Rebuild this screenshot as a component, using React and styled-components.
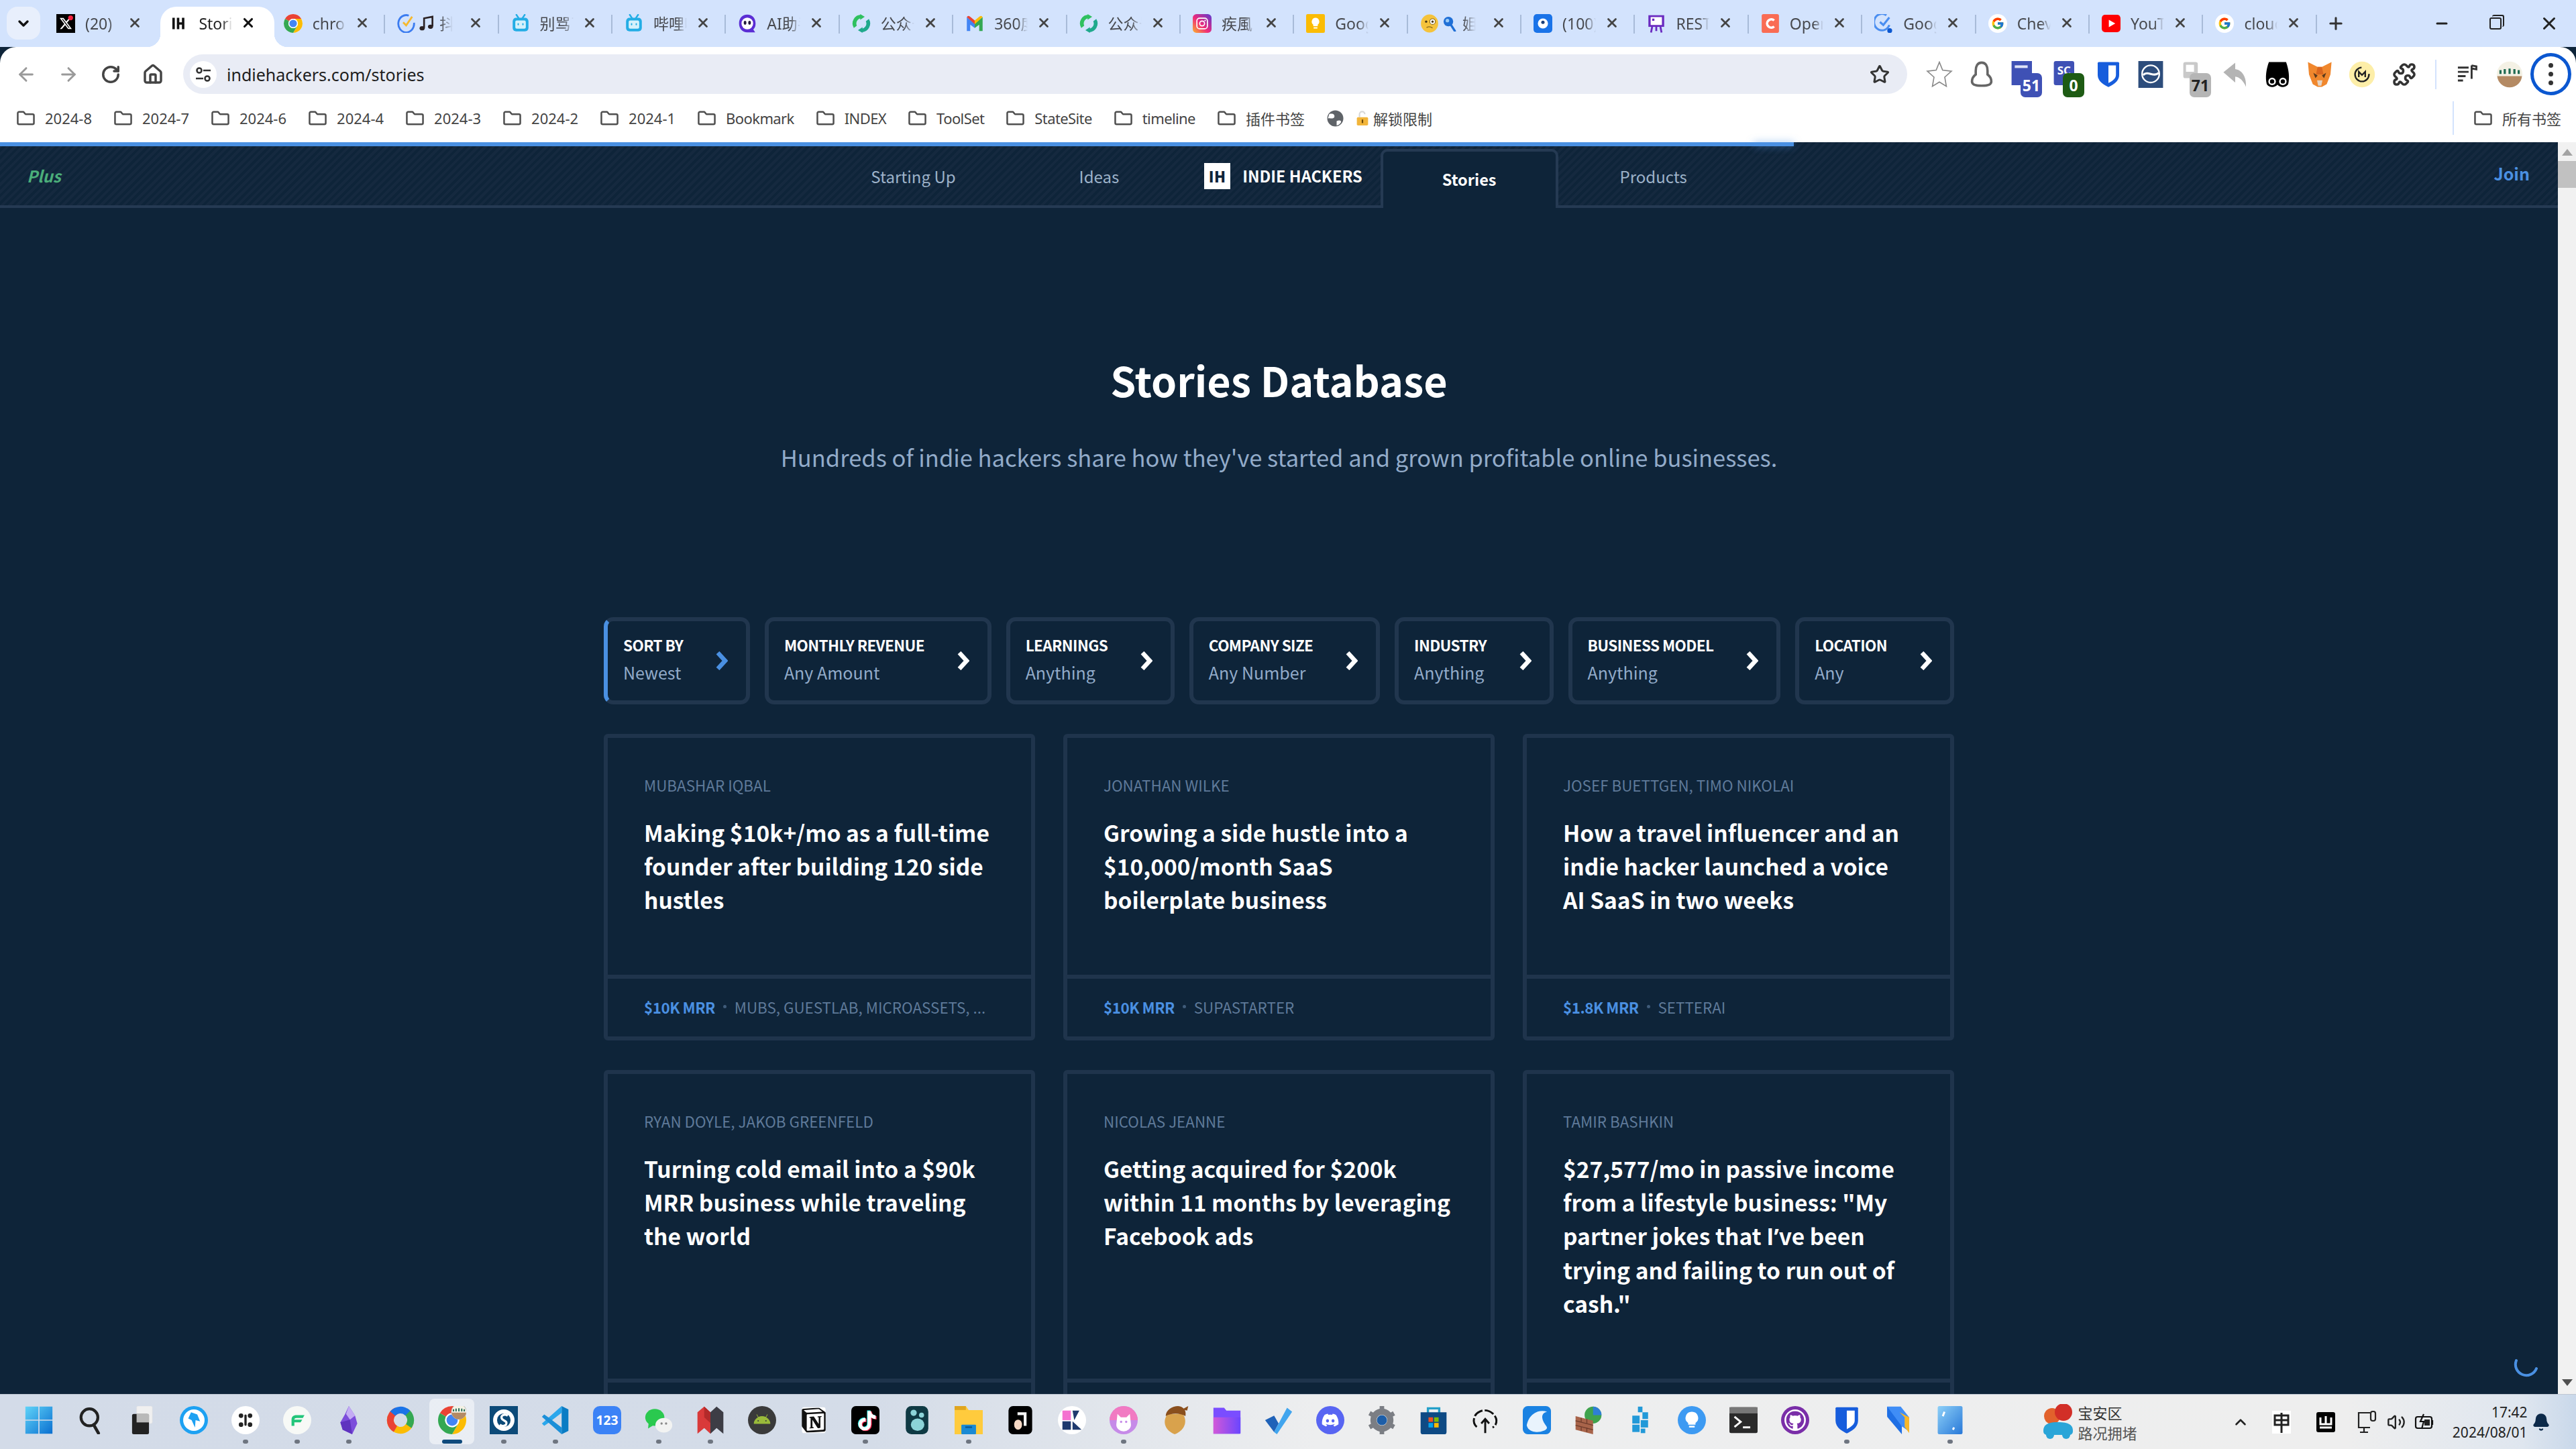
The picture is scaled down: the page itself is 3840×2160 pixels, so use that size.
import React from "react";
import styled, { createGlobalStyle, css } from "styled-components";
import { ArrowLeft, ArrowRight, RotateCw, Home, Star, Plus as PlusIcon, Minus, X, ChevronDown, ChevronUp, Puzzle, Bell, Volume2 } from "lucide-react";
import { FaXTwitter } from "react-icons/fa6";
import { FaDiscord, FaGithub, FaAndroid, FaTiktok } from "react-icons/fa";
import { FcGoogle } from "react-icons/fc";
import { SiNotion } from "react-icons/si";

const UI = `"Noto Sans", "Noto Sans CJK SC", sans-serif`;
const SITE = `"Noto Sans CJK SC", "Noto Sans", sans-serif`;

const Global = createGlobalStyle`
  html, body { margin: 0; padding: 0; background: #0e2439; overflow: hidden; }
  * { box-sizing: border-box; }
`;

const Frame = styled.div`
  width: 3840px; height: 2160px; display: flex; flex-direction: column; overflow: hidden; position: relative;
  font-family: ${UI};
`;
const TabStrip = styled.div`
  height: 70px; flex: none; background: #d3e3fd; display: flex; align-items: flex-end; padding-left: 10px;
`;
const TabMenu = styled.div`
  width: 50px; height: 49px; margin-bottom: 11px; margin-right: 10px; border-radius: 16px; background: #e8effc;
  display: flex; align-items: center; justify-content: center; color: #111;
`;
const Tab = styled.div`
  width: 169.4px; height: 60px; flex: none; position: relative; display: flex; align-items: center;
  padding: 0 0 10px 14px; border-radius: 24px 24px 0 0; color: #47494e;
  ${p => p.$active && css`
    background: #fff; color: #1f1f1f; z-index: 1;
    &::before, &::after { content: ""; position: absolute; bottom: 0; width: 20px; height: 20px; }
    &::before { left: -20px; background: radial-gradient(circle at 0 0, transparent 20px, #fff 20.5px); }
    &::after { right: -20px; background: radial-gradient(circle at 100% 0, transparent 20px, #fff 20.5px); }
  `}
  ${p => p.$sep && css`
    &::after { content: ""; position: absolute; right: 4px; top: 12px; width: 2px; height: 28px; background: #a8bbd8; }
  `}
`;
const TabExtra = styled.span`
  margin-left: 4px; flex: none;
`;
const TabLabel = styled.span`
  margin-left: ${p => (p.$short ? "7px" : "15px")}; width: ${p => (p.$short ? "20px" : "50px")}; overflow: hidden; white-space: nowrap; font-size: 23px; line-height: 30px; flex: none;
  -webkit-mask-image: linear-gradient(90deg, #000 ${p => (p.$short ? "10%" : "70%")}, transparent 100%);
  mask-image: linear-gradient(90deg, #000 ${p => (p.$short ? "10%" : "70%")}, transparent 100%);
`;
const TabClose = styled.span`
  position: absolute; left: 118px; top: 11px; width: 26px; height: 26px; display: flex; align-items: center; justify-content: center;
  color: ${p => (p.$active ? "#111" : "#444")};
`;
const NewTab = styled.div`
  width: 30px; height: 60px; margin-left: 9px; padding-bottom: 10px; display: flex; align-items: center; justify-content: center; color: #333;
`;
const WindowButtons = styled.div`
  margin-left: auto; display: flex; height: 70px;
`;
const WindowButton = styled.div`
  width: 80px; display: flex; align-items: center; justify-content: center; color: #222;
`;
const RestoreMark = styled.span`
  width: 18px; height: 18px; border: 2.5px solid #222; border-radius: 3px; position: relative; display: block;
  &::after { content: ""; position: absolute; left: 2px; top: -6px; width: 16px; height: 16px; border: 2.5px solid #222; border-left: 0; border-bottom: 0; border-radius: 3px; }
`;
const Toolbar = styled.div`
  height: 70px; flex: none; background: #fff; border-radius: 24px 24px 0 0; padding: 11px 0 0 7px; display: flex; align-items: flex-start;
  position: relative; z-index: 0;
`;
const ToolButton = styled.div`
  width: 63px; height: 59px; flex: none; display: flex; align-items: center; justify-content: center;
  color: ${p => (p.$dim ? "#9a9a9a" : "#444")};
`;
const Omnibox = styled.div`
  flex: 1; height: 59px; margin-left: 14px; margin-right: 16px; border-radius: 30px; background: #e9ecf5;
  display: flex; align-items: center; padding: 0 26px 0 10px;
`;
const SiteChip = styled.div`
  width: 40px; height: 40px; flex: none; border-radius: 50%; background: #fff; display: flex; align-items: center; justify-content: center;
`;
const UrlText = styled.span`
  margin-left: 15px; font-size: 25px; color: #1f1f1f; flex: 1;
`;
const ExtSlot = styled.div`
  width: 63px; height: 59px; flex: none; display: flex; align-items: center; justify-content: center; position: relative; color: #555;
`;
const ExtBadge = styled.span`
  position: absolute; left: 27px; bottom: -5px; min-width: 32px; height: 36px; border-radius: 7px; font-size: 23px; font-weight: 700; line-height: 36px;
  text-align: center; color: ${p => p.$fg}; background: ${p => p.$bg}; padding: 0 2px;
`;
const ToolDivider = styled.div`
  width: 31px; height: 59px; flex: none; display: flex; align-items: center; justify-content: center;
  &::after { content: ""; width: 2px; height: 44px; background: #d3e3fd; }
`;
const MenuRing = styled.div`
  width: 61px; height: 63px; flex: none; margin: -2px 7px 0 0; border: 5px solid #0b57d0; border-radius: 50%;
  display: flex; flex-direction: column; align-items: center; justify-content: center; gap: 6px;
  span { width: 7px; height: 7px; border-radius: 50%; background: #333; }
`;
const Bookmarks = styled.div`
  height: 72px; flex: none; background: #fff; display: flex; align-items: center; padding-left: 25px; gap: 33px; font-size: 22px; color: #444;
`;
const Bookmark = styled.div`
  display: flex; align-items: center; gap: 15px; white-space: nowrap;
  ${p => p.$latin && "letter-spacing: -0.6px;"}
`;
const ScriptMark = styled.div`
  display: flex; align-items: center; white-space: nowrap; gap: 5px;
`;
const ScriptGlobe = styled.span`
  margin-right: 12px;
`;
const OtherBookmarks = styled.div`
  margin-left: auto; display: flex; align-items: center; height: 50px; padding-left: 30px; padding-right: 22px; gap: 15px; border-left: 2px solid #d3e3fd; white-space: nowrap;
`;

const Viewport = styled.div`
  flex: 1; min-height: 0; display: flex; position: relative;
`;
const Progress = styled.div`
  position: absolute; left: 0; top: 0; width: 2674px; height: 6px; background: #4a90e2; z-index: 5;
  &::after { content: ""; position: absolute; right: 0; top: 0; width: 60px; height: 6px; box-shadow: 0 0 12px rgba(74,144,226,.55); }
`;
const Page = styled.main`
  flex: 1; min-width: 0; background: #0e2439; overflow: hidden; font-family: ${SITE}; position: relative;
`;
const Scrollbar = styled.div`
  width: 27px; flex: none; background: #f1f1f1; display: flex; flex-direction: column; align-items: center; position: relative;
`;
const ScrollArrow = styled.span`
  width: 0; height: 0; border-left: 8px solid transparent; border-right: 8px solid transparent; flex: none;
  ${p => (p.$down ? "border-top: 10px solid #505050; margin-top: auto; margin-bottom: 12px;" : "border-bottom: 10px solid #a3a3a3; margin-top: 10px;")}
`;
const ScrollThumb = styled.span`
  width: 100%; height: 40px; margin-top: 8px; background: #c1c1c1; flex: none;
`;
const TopNav = styled.nav`
  height: 98px; display: grid; grid-template-columns: 1fr auto 1fr; align-items: stretch; border-bottom: 4px solid #253a53; padding-top: 6px;
  background: repeating-linear-gradient(-45deg, #0e2439 0 4px, #15293f 4px 8px);
`;
const PlusLink = styled.span`
  padding-left: 40px; align-self: center; font-weight: 700; font-style: italic; font-size: 24px; color: #4bae7a; margin-top: -2px;
`;
const NavItems = styled.div`
  display: flex; align-items: stretch;
`;
const NavItem = styled.a`
  padding: 0 92px; display: flex; align-items: center; font-size: 24px; color: #9db2c9; margin-bottom: ${p => (p.$active ? "-4px" : "0")};
  ${p => p.$active && css`
    color: #fff; font-weight: 700; font-size: 23.5px; background: #0e2439; margin-top: 4px; padding-bottom: 2px;
    border: 4px solid #253a53; border-bottom: 0; border-radius: 10px 10px 0 0; padding-left: 88px; padding-right: 88px;
  `}
`;
const Brand = styled.a`
  padding: 0 27px 0 35px; display: flex; align-items: center; gap: 18px; color: #fff; font-weight: 700; font-size: 23.5px; white-space: nowrap;
`;
const BrandMark = styled.span`
  width: 39px; height: 39px; background: #fff; color: #0e2439; display: flex; align-items: center; justify-content: center;
  font-size: 22px; font-weight: 900; letter-spacing: 0.5px;
`;
const JoinLink = styled.a`
  justify-self: end; align-self: center; padding-right: 42px; color: #4a90e2; font-size: 25px; font-weight: 700; margin-top: -8px;
`;
const Hero = styled.header`
  padding-top: 213px; text-align: center;
`;
const Title = styled.h1`
  margin: 0; font-size: 61px; line-height: 86px; font-weight: 700; color: #fff;
`;
const Subtitle = styled.p`
  margin: 42px 0 0; font-size: 34.5px; line-height: 60px; color: #92abc9;
`;
const Content = styled.section`
  width: 2013px; margin: 209px auto 0;
`;
const Filters = styled.div`
  display: flex; justify-content: space-between;
`;
const Filter = styled.button`
  height: 130px; padding: 0 27px 0 23px; display: flex; align-items: center; gap: 49px; background: transparent; font-family: inherit;
  border: 6px solid #21364e; border-radius: 14px; text-align: left;
  ${p => p.$active && "border-left-color: #4a90e2;"}
`;
const FilterText = styled.span`
  display: flex; flex-direction: column;
`;
const FilterLabel = styled.span`
  font-size: 22.5px; line-height: 38px; font-weight: 700; color: #fff; white-space: nowrap; margin-top: -4px; letter-spacing: -0.6px;
`;
const FilterValue = styled.span`
  font-size: 25px; line-height: 44px; color: #92abc9; white-space: nowrap;
`;
const CardGrid = styled.div`
  display: grid; grid-template-columns: repeat(3, 643px); column-gap: 42px; row-gap: 44px; margin-top: 44px;
`;
const Card = styled.article`
  border: 6px solid #1f344c; border-radius: 6px; display: flex; flex-direction: column;
`;
const CardBody = styled.div`
  flex: 1; padding: 52px 54px 87px;
`;
const Author = styled.div`
  font-size: 22.4px; line-height: 36px; color: #5f7a99; white-space: nowrap;
`;
const CardTitle = styled.h2`
  margin: 28px 0 0; font-size: 33.5px; line-height: 50px; font-weight: 700; color: #fff;
`;
const Apostrophe = styled.span`
  font-family: "Noto Sans", sans-serif;
`;
const CardFoot = styled.div`
  height: 92px; flex: none; border-top: 6px solid #1f344c; padding: 0 54px 3px; display: flex; align-items: center; font-size: 22.4px; white-space: nowrap; color: #5f7a99;
`;
const Mrr = styled.span`
  font-weight: 700; color: #4a90e2; letter-spacing: -0.5px;
`;
const Dot = styled.span`
  width: 5px; height: 5px; border-radius: 50%; background: #3f5b79; margin: 0 12px; flex: none;
`;
const Spinner = styled.svg`
  position: absolute; right: 27px; bottom: 20px; width: 40px; height: 40px;
`;

const Taskbar = styled.footer`
  height: 82px; flex: none; display: flex; align-items: stretch; padding-left: 19px; border-top: 1px solid #bfc7d2; font-family: ${UI};
  background: linear-gradient(90deg, #d3dbe8 0, #d4dce8 1300px, #edeeef 1960px, #eeeeee 3500px, #dfe6ef 3760px, #c9d8ea 3840px);
`;
const TaskSlot = styled.div`
  width: 77.02px; flex: none; position: relative; display: flex; align-items: center; justify-content: center; padding-bottom: 5px;
  ${p => p.$active && css`
    &::before { content: ""; position: absolute; left: 5px; right: 5px; top: 6px; bottom: 7px; border-radius: 8px; background: rgba(255,255,255,.5); }
  `}
  & > svg { position: relative; }
`;
const TaskDot = styled.span`
  position: absolute; bottom: 8px; left: 50%; transform: translateX(-50%); height: 6px; border-radius: 3px;
  width: ${p => (p.$wide ? "30px" : "8px")}; background: ${p => (p.$wide ? "#0f4a7c" : "#6e7580")};
`;
const Weather = styled.div`
  margin-left: 98px; width: 230px; display: flex; align-items: center; gap: 6px; flex: none;
`;
const WeatherText = styled.div`
  font-family: "Noto Sans CJK SC", sans-serif; font-size: 22px; line-height: 30px; color: #333;
  span { display: block; color: #555; }
`;
const Tray = styled.div`
  display: flex; align-items: center; flex: none; margin-left: 38px;
`;
const TrayItem = styled.div`
  width: ${p => p.$w || 66}px; display: flex; align-items: center; justify-content: center; color: #222; flex: none;
`;
const Clock = styled.div`
  margin-left: -2px; width: 130px; text-align: right; font-size: 21px; line-height: 30px; color: #222; flex: none; align-self: center;
`;

const G = styled.svg`
  width: ${p => p.$s}px; height: ${p => p.$s}px; flex: none; display: block;
`;

const chromeLogo = (
  <>
    <circle cx="50" cy="50" r="50" fill="#fff" />
    <path d="M50 0A50 50 0 0 1 93.3 25L50 25A25 25 0 0 0 28.3 37.5L6.7 25A50 50 0 0 1 50 0Z" fill="#ea4335" />
    <path d="M93.3 25A50 50 0 0 1 50 100L71.7 62.5A25 25 0 0 0 50 25Z" fill="#fbbc04" />
    <path d="M6.7 25A50 50 0 0 0 50 100L71.7 62.5A25 25 0 0 1 28.3 37.5Z" fill="#34a853" />
    <circle cx="50" cy="50" r="25" fill="#fff" />
    <circle cx="50" cy="50" r="20" fill="#4285f4" />
  </>
);
const shield = (bg) => (
  <>
    <path d="M14 4H86Q90 4 90 8V52C90 76 66 90 50 97C34 90 10 76 10 52V8Q10 4 14 4Z" fill={bg} />
    <path d="M50 16H78V52C78 66 62 76 50 82Z" fill="#fff" />
  </>
);
const bili = (
  <>
    <path d="M28 4L40 22M72 4L60 22" stroke="#23ade5" strokeWidth="9" strokeLinecap="round" />
    <rect x="8" y="20" width="84" height="72" rx="18" fill="#23ade5" />
    <rect x="22" y="34" width="56" height="44" rx="8" fill="#d5f1fb" />
    <rect x="34" y="48" width="7" height="12" rx="3.5" fill="#23ade5" />
    <rect x="59" y="48" width="7" height="12" rx="3.5" fill="#23ade5" />
  </>
);
const wxread = (
  <>
    <path d="M50 4A46 46 0 0 0 10 74L26 62A28 28 0 0 1 50 22Z" fill="#2fc05f" />
    <path d="M50 96A46 46 0 0 0 90 26L74 38A28 28 0 0 1 50 78Z" fill="#1fa98c" />
    <path d="M44 0L68 14L44 30Z" fill="#2fc05f" /><path d="M56 100L32 86L56 70Z" fill="#1fa98c" />
  </>
);
const gLogo = (<><circle cx="50" cy="50" r="50" fill="#fff" /><FcGoogle x="14" y="14" size={72} /></>);
const ring = (c, inner) => (<><circle cx="50" cy="50" r="50" fill={c} />{inner}</>);

const GLYPHS = {
  x: (<><rect width="100" height="100" fill="#000" /><FaXTwitter x="14" y="14" size={72} color="#fff" /><circle cx="76" cy="20" r="13" fill="#f4213f" /></>),
  ih: (<><path d="M14 20h13v60H14zM38 20h13v24h14V20h13v60H65V56H51v24H38z" fill="#111" /></>),
  chrome: chromeLogo,
  tick: (<><path d="M62 8A42 46 0 1 0 90 46" fill="none" stroke="#3b7cf0" strokeWidth="10" /><path d="M32 44L48 60L80 14" fill="none" stroke="#f6b92e" strokeWidth="10" /></>),
  music: (<><path d="M34 78V18L86 8V68" fill="none" stroke="#2b2224" strokeWidth="11" /><ellipse cx="22" cy="80" rx="16" ry="13" fill="#2b2224" /><ellipse cx="74" cy="70" rx="16" ry="13" fill="#2b2224" /></>),
  bili,
  aiz: (<><path d="M50 3C22 3 6 24 6 50C6 78 24 97 50 97H92L82 82C92 72 94 62 94 50C94 24 78 3 50 3Z" fill="#5b2ed4" /><circle cx="50" cy="50" r="31" fill="#fff" /><ellipse cx="38" cy="46" rx="7" ry="10" fill="#231a3d" /><ellipse cx="62" cy="46" rx="7" ry="10" fill="#231a3d" /></>),
  wxread,
  gmail: (<><path d="M8 90V16L50 50V74L26 56V90Z" fill="#4285f4" /><path d="M92 90V16L50 50V74L74 56V90Z" fill="#34a853" /><path d="M8 16Q14 4 26 14L50 34L50 54Z" fill="#ea4335" /><path d="M92 16Q86 4 74 14L50 34L50 54Z" fill="#fbbc04" /></>),
  insta: (<><defs><linearGradient id="ig" x1="0" y1="1" x2="1" y2="0"><stop offset="0" stopColor="#fdb32c" /><stop offset=".45" stopColor="#ee2a7b" /><stop offset="1" stopColor="#5b3ad1" /></linearGradient></defs><rect width="100" height="100" rx="20" fill="url(#ig)" /><rect x="22" y="22" width="56" height="56" rx="14" fill="none" stroke="#fff" strokeWidth="6" /><circle cx="50" cy="50" r="13" fill="none" stroke="#fff" strokeWidth="6" /><circle cx="66" cy="34" r="4" fill="#fff" /></>),
  keep: (<><rect width="100" height="100" rx="8" fill="#fbbc04" /><path d="M50 20a20 20 0 0 1 12 36v8H38v-8A20 20 0 0 1 50 20z" fill="#fff" /><rect x="40" y="70" width="20" height="7" fill="#fff" /></>),
  monocle: (<><ellipse cx="50" cy="50" rx="46" ry="48" fill="#f5c33b" /><circle cx="66" cy="40" r="15" fill="#fff" stroke="#8b6a19" strokeWidth="4" /><circle cx="66" cy="40" r="6" fill="#4b3a12" /><circle cx="32" cy="40" r="6" fill="#4b3a12" /><path d="M34 72Q50 62 66 74" stroke="#8b6a19" strokeWidth="5" fill="none" /></>),
  lens: (<><circle cx="42" cy="38" r="30" fill="#1f6fd6" /><circle cx="36" cy="32" r="11" fill="#9ccbf5" /><path d="M60 62L82 96" stroke="#1f6fd6" strokeWidth="14" strokeLinecap="round" /></>),
  blueeye: (<><rect width="100" height="100" rx="18" fill="#1a73e8" /><circle cx="50" cy="50" r="27" fill="#fff" /><circle cx="50" cy="44" r="9" fill="#1a3f7a" /></>),
  rest: (<><rect x="8" y="6" width="84" height="62" fill="#6a2bc0" /><rect x="20" y="16" width="60" height="42" fill="#fff" /><rect x="28" y="24" width="12" height="12" fill="#6a2bc0" /><path d="M28 68L22 98M72 68L78 98M50 68V90" stroke="#6a2bc0" strokeWidth="10" /></>),
  ope: (<><rect x="4" width="92" height="100" rx="10" fill="#f96c54" /><path d="M70 34A22 22 0 1 0 70 66" fill="none" stroke="#fff" strokeWidth="13" /></>),
  gtask: (<><path d="M64 6A42 44 0 1 0 80 58" fill="none" stroke="#4a8ef0" strokeWidth="11" /><path d="M30 42L48 58L80 18" fill="none" stroke="#4a8ef0" strokeWidth="11" /><circle cx="82" cy="88" r="13" fill="#0b57d0" /></>),
  google: gLogo,
  youtube: (<><rect y="4" width="100" height="92" rx="18" fill="#f00" /><path d="M38 30L72 50L38 70Z" fill="#fff" /></>),
  extStar: (<path d="M50 4L62 34L95 38L70 60L76 94L50 78L24 94L30 60L5 38L38 34Z" fill="none" stroke="#888" strokeWidth="4" />),
  extCloud: (<path d="M50 6C34 6 28 20 28 36V50C20 56 14 66 14 76C14 88 26 92 50 92C74 92 86 88 86 76C86 66 80 56 72 50V36C72 20 66 6 50 6Z" fill="none" stroke="#666" strokeWidth="9" />),
  doc: (<><rect x="4" y="0" width="76" height="90" fill="#3f51b5" /><rect x="16" y="16" width="48" height="10" fill="#dfe3f7" /></>),
  sc: (<><rect x="4" y="0" width="76" height="90" rx="8" fill="#3f51b5" /><text x="42" y="50" fontSize="42" fontWeight="700" textAnchor="middle" fill="#fff" fontFamily="Noto Sans">SC</text></>),
  bitw: shield("#175ddc"),
  tilde: (<><rect x="4" width="92" height="100" fill="#2d4d7c" /><circle cx="50" cy="48" r="32" fill="none" stroke="#fff" strokeWidth="6" /><path d="M22 52C40 34 60 62 80 44" stroke="#fff" strokeWidth="8" fill="none" /></>),
  grey71: (<><rect x="14" y="4" width="54" height="60" rx="8" fill="#c9c9c9" /><rect x="24" y="14" width="30" height="26" fill="#fff" /></>),
  reply: (<path d="M6 42L50 6V30C78 34 92 62 90 96C80 72 66 60 50 58V80Z" fill="#b4b4b4" />),
  blob: (<><path d="M18 4H82C92 30 96 62 90 86C80 100 60 100 50 88C40 100 20 100 10 86C4 62 8 30 18 4Z" fill="#000" /><circle cx="30" cy="76" r="14" fill="#fff" /><circle cx="70" cy="76" r="14" fill="#fff" /><circle cx="30" cy="76" r="8" fill="#000" /><circle cx="70" cy="76" r="8" fill="#000" /></>),
  fox: (<><path d="M6 4L42 22H58L94 4L90 50L76 86L58 96H42L24 86L10 50Z" fill="#f0872d" /><path d="M26 44L42 54L34 64ZM74 44L58 54L66 64Z" fill="#5a3a1c" /><path d="M40 72H60L56 92H44Z" fill="#e4d3c3" /><path d="M42 22H58L64 50H36Z" fill="#d9661f" /></>),
  mcoin: (<><circle cx="50" cy="50" r="48" fill="#fdeea8" /><circle cx="50" cy="50" r="26" fill="none" stroke="#222" strokeWidth="6" strokeDasharray="120 40" /><path d="M38 60V40L50 52L62 40V60" stroke="#222" strokeWidth="6" fill="none" /></>),
  queue: (<path d="M6 18H56M6 38H56M6 58H42M6 78H30M70 8V70M70 8L92 12V26L70 22" stroke="#333" strokeWidth="9" fill="none" />),
  bowl: (<><circle cx="50" cy="50" r="48" fill="#f4f1e5" /><path d="M4 56H96C94 80 74 98 50 98C26 98 6 80 4 56Z" fill="#b48a64" /><path d="M16 34v14M32 30v18M50 28v20M68 30v18M84 34v14" stroke="#1e6a52" strokeWidth="8" /></>),
  win: (<><defs><linearGradient id="wn" x1="0" y1="0" x2="1" y2="1"><stop offset="0" stopColor="#5fd3f8" /><stop offset="1" stopColor="#0a6fd0" /></linearGradient></defs><path d="M2 2H48V48H2ZM52 2H98V48H52ZM2 52H48V98H2ZM52 52H98V98H52Z" fill="url(#wn)" /></>),
  search: (<><circle cx="46" cy="40" r="30" fill="none" stroke="#222" strokeWidth="10" /><path d="M62 68L78 96" stroke="#222" strokeWidth="11" strokeLinecap="round" /></>),
  taskview: (<><rect x="30" width="56" height="62" rx="5" fill="#f0f0f0" stroke="#ddd" /><rect x="14" y="28" width="60" height="72" rx="6" fill="#222" /><rect x="30" y="28" width="44" height="30" fill="#b9b9b9" /></>),
  wolf: ring("#1da1f2", <><circle cx="50" cy="50" r="38" fill="#fff" /><path d="M40 22L62 30L72 54L56 50L54 76L42 50L30 44Z" fill="#1da1f2" /></>),
  dots: ring("#fff", <g fill="#222"><circle cx="34" cy="34" r="8" /><circle cx="66" cy="34" r="8" /><circle cx="34" cy="66" r="8" /><circle cx="66" cy="66" r="8" /><rect x="46" y="30" width="8" height="40" rx="4" /></g>),
  flow: ring("#f7f9f6", <path d="M30 70V48C30 38 36 32 48 32H76L70 42H48C42 42 40 44 40 48H68L62 58H40V70Z" fill="#22c57a" />),
  gem: (<><path d="M50 0L72 34L80 62L62 100L28 84L20 58L36 30Z" fill="#7c4ddb" /><path d="M50 0L72 34L54 48L40 28Z" fill="#c4acf4" /><path d="M20 58L54 48L62 100L28 84Z" fill="#5f33bf" /></>),
  swirl: (<><circle cx="50" cy="50" r="36" fill="none" stroke="#fbbc04" strokeWidth="24" strokeDasharray="120 300" transform="rotate(10 50 50)" /><circle cx="50" cy="50" r="36" fill="none" stroke="#34a853" strokeWidth="24" strokeDasharray="60 300" transform="rotate(-60 50 50)" /><circle cx="50" cy="50" r="36" fill="none" stroke="#ea4335" strokeWidth="24" strokeDasharray="80 300" transform="rotate(120 50 50)" /><circle cx="50" cy="50" r="36" fill="none" stroke="#1a73e8" strokeWidth="24" strokeDasharray="60 300" transform="rotate(220 50 50)" /></>),
  chromeAvatar: (<>{chromeLogo}<g transform="translate(46 -8) scale(.56)"><circle cx="50" cy="50" r="48" fill="#f4f1e5" stroke="#aaa" strokeWidth="3" /><path d="M4 56H96C94 80 74 98 50 98C26 98 6 80 4 56Z" fill="#b48a64" /><path d="M16 34v14M32 30v18M50 28v20M68 30v18M84 34v14" stroke="#1e6a52" strokeWidth="8" /></g></>),
  simple: (<><rect width="100" height="100" fill="#0c4a78" /><circle cx="50" cy="50" r="38" fill="#fff" /><circle cx="50" cy="50" r="24" fill="#0c4a78" /><path d="M64 34C52 26 36 34 44 46C52 54 64 54 58 66C50 74 40 70 36 66" stroke="#fff" strokeWidth="8" fill="none" /></>),
  vscode: (<><path d="M72 0L96 12V88L72 100Z" fill="#0a7cc4" /><path d="M72 0V24L28 58L10 70L2 62L72 0Z" fill="#2ba7ec" /><path d="M72 100V76L28 42L10 30L2 38L72 100Z" fill="#1b8fd8" /></>),
  n123: (<><rect width="100" height="100" rx="24" fill="#3b82f6" /><text x="50" y="66" textAnchor="middle" fontSize="46" fontWeight="700" fill="#fff" fontFamily="Noto Sans">123</text></>),
  wechat: (<><ellipse cx="36" cy="40" rx="34" ry="30" fill="#2ac94f" /><path d="M14 60L12 80L34 66Z" fill="#2ac94f" /><ellipse cx="68" cy="68" rx="30" ry="26" fill="#f2f3f2" /><circle cx="60" cy="62" r="4" fill="#888" /><circle cx="76" cy="62" r="4" fill="#888" /></>),
  mm: (<><path d="M4 22L28 2L50 22V98L28 78L4 98Z" fill="#d93a3a" /><path d="M96 22L72 2L50 22V98L72 78L96 98Z" fill="#3d3d45" /><path d="M28 2L50 22V60L28 40Z" fill="#b32a2a" /></>),
  android: ring("#3a3a3a", <FaAndroid x="20" y="20" size={60} color="#9aba3a" />),
  notion: (<><rect x="8" y="4" width="84" height="92" rx="8" fill="#fff" /><SiNotion x="6" y="6" size={88} color="#111" /></>),
  tiktok: (<><rect width="100" height="100" rx="16" fill="#000" /><FaTiktok x="19" y="15" size={70} color="#25f4ee" /><FaTiktok x="24" y="19" size={70} color="#fe2c55" /><FaTiktok x="21" y="17" size={70} color="#fff" /></>),
  paw: (<><rect x="10" width="80" height="100" rx="20" fill="#0f3a44" /><circle cx="38" cy="24" r="11" fill="#8cd4d8" /><circle cx="66" cy="32" r="9" fill="#8cd4d8" /><ellipse cx="52" cy="66" rx="24" ry="22" fill="#8cd4d8" /></>),
  explorer: (<><path d="M0 0H40L50 14H100V100H0Z" fill="#ffcb3d" /><path d="M0 0H40V14H0Z" fill="#e0a51e" /><rect x="24" y="66" width="52" height="34" rx="3" fill="#1a8ad4" /><rect x="38" y="72" width="24" height="6" fill="#0b5c99" /></>),
  blackdoc: (<><rect x="8" width="84" height="100" rx="16" fill="#000" /><path d="M40 22H72V70H62V32H40Z" fill="#f5f5f5" /><ellipse cx="42" cy="66" rx="14" ry="18" fill="#f6d8c4" /></>),
  kk: ring("#fff", <><path d="M46 16H16V50H46Z" fill="#f472d0" /><path d="M46 54H16V84H46Z" fill="#1f3a6e" /><path d="M52 16H76L58 50Z" fill="#1f3a6e" /><path d="M52 54L84 84H52Z" fill="#1f3a6e" /></>),
  cat: ring("#c68be8", <><path d="M0 50A50 50 0 0 1 100 50Z" fill="#f17ac2" /><path d="M28 28L40 40H60L72 28L76 66A26 24 0 0 1 24 66Z" fill="#fff" /><circle cx="41" cy="56" r="4" fill="#c68be8" /><circle cx="59" cy="56" r="4" fill="#c68be8" /></>),
  acorn: (<><path d="M24 28C6 46 6 84 48 100C90 84 92 46 76 28Z" fill="#d9a24c" /><path d="M16 36C16 14 40 0 60 0C80 2 90 16 86 36C66 24 36 24 16 36Z" fill="#8a4f1d" /><path d="M74 12L96 0L92 16Z" fill="#8a4f1d" /></>),
  purpfolder: (<><path d="M2 6H40L48 16H98V94Q98 98 94 98H2Z" fill="#7a4dff" /><path d="M2 40H98V98H2Z" fill="url(#pf)" /><defs><linearGradient id="pf" x1="0" y1="0" x2="1" y2="0"><stop offset="0" stopColor="#d258d8" /><stop offset="1" stopColor="#6a46ff" /></linearGradient></defs></>),
  check: (<><path d="M2 50L34 34L50 62L34 92Z" fill="#1f62b8" /><path d="M34 92L80 6L98 20L44 100Z" fill="#41a5ee" /></>),
  discord: ring("#5865f2", <FaDiscord x="18" y="18" size={64} color="#fff" />),
  gear: (<><circle cx="50" cy="50" r="30" fill="none" stroke="#7b7e84" strokeWidth="22" /><path d="M50 0V100M6 25L94 75M6 75L94 25" stroke="#7b7e84" strokeWidth="16" strokeDasharray="14 72" /><circle cx="50" cy="50" r="18" fill="#1d5ea8" /></>),
  store: (<><path d="M30 24V8H70V24" fill="none" stroke="#24a0c9" strokeWidth="8" /><path d="M4 22H96V92Q96 100 88 100H12Q4 100 4 92Z" fill="#0e4a84" /><rect x="32" y="40" width="16" height="16" fill="#f25022" /><rect x="52" y="40" width="16" height="16" fill="#7fba00" /><rect x="32" y="60" width="16" height="16" fill="#00a4ef" /><rect x="52" y="60" width="16" height="16" fill="#ffb900" /></>),
  sync: (<><path d="M20 74C4 60 6 30 30 20C44 12 62 14 76 26C96 42 92 70 76 76" fill="none" stroke="#111" strokeWidth="7" strokeDasharray="34 8" /><path d="M50 96V50M36 62L50 46L64 62" fill="none" stroke="#111" strokeWidth="7" /></>),
  wave: (<><rect width="100" height="100" rx="18" fill="#1a82e2" /><path d="M14 68C22 26 58 10 86 20C68 24 60 40 84 72C92 84 70 92 50 92C30 92 16 82 14 68Z" fill="#e9f3fc" /></>),
  brick: (<><circle cx="66" cy="32" r="30" fill="#3fa34d" /><path d="M66 2A30 30 0 0 1 96 32H66Z" fill="#2e7fd6" /><path d="M4 36L66 52V100L4 84Z" fill="#a8644a" /><path d="M4 52L66 68M4 68L66 84M24 42V58M44 46V62M24 72V88M44 76V92" stroke="#6e3c2c" strokeWidth="3" /></>),
  cubes: (<g fill="#2299d8"><rect x="42" y="2" width="16" height="20" /><rect x="58" y="22" width="20" height="24" /><rect x="22" y="34" width="26" height="28" /><rect x="52" y="50" width="26" height="26" /><rect x="22" y="66" width="26" height="26" /><rect x="52" y="80" width="16" height="16" /></g>),
  bulb: ring("#3d9af2", <><path d="M50 20a22 22 0 0 1 13 40v6H37v-6A22 22 0 0 1 50 20z" fill="#fff" /><rect x="40" y="70" width="20" height="6" fill="#fff" /></>),
  term: (<><rect y="4" width="100" height="92" rx="6" fill="#2a2a2a" /><rect y="4" width="100" height="22" fill="#777" /><path d="M18 38L40 56L18 74" fill="none" stroke="#fff" strokeWidth="7" /><rect x="48" y="72" width="26" height="7" fill="#fff" /></>),
  ghub: ring("#7a2ea8", <><circle cx="50" cy="50" r="38" fill="#fff" /><FaGithub x="17" y="17" size={66} color="#7a2ea8" /></>),
  vfiles: (<><path d="M10 2H58L88 40V90L62 72L10 34Z" fill="#3f8df6" /><path d="M54 22L88 40V96L72 74V40Z" fill="#f9b728" /><path d="M10 2V38L62 100V72Z" fill="#1f6fe4" /></>),
  mapblue: (<><defs><linearGradient id="mb" x1="0" y1="0" x2="1" y2="1"><stop offset="0" stopColor="#8dd0f8" /><stop offset="1" stopColor="#2878d8" /></linearGradient></defs><rect x="6" width="88" height="100" rx="6" fill="url(#mb)" /><path d="M30 20L24 36M64 76L60 84" stroke="#fff" strokeWidth="7" /></>),
  lock: (<><rect x="12" y="44" width="76" height="56" rx="8" fill="#f2b53a" /><path d="M30 44V24A18 18 0 0 1 66 24" fill="none" stroke="#d8d8d8" strokeWidth="10" /><rect x="45" y="60" width="10" height="24" fill="#6b4a0a" /></>),
  globe: (<><circle cx="50" cy="50" r="48" fill="#5f6368" /><path d="M14 24C34 18 50 26 44 44C30 56 24 46 6 50ZM58 66C74 58 88 62 84 74C76 86 64 92 58 92Z" fill="#fff" /></>),
};

const Glyph = ({ name, s }) => <G $s={s} viewBox="0 0 100 100">{GLYPHS[name]}</G>;

const FolderSvg = styled.svg`
  width: 27px; height: 22px; flex: none;
`;
const Folder = () => (
  <FolderSvg viewBox="0 0 28 22" fill="none" stroke="#4f4f4f" strokeWidth="2.6" strokeLinejoin="round">
    <path d="M1.5 3.5a2 2 0 0 1 2-2h7l3 3.5h11a2 2 0 0 1 2 2v11.5a2 2 0 0 1-2 2h-21a2 2 0 0 1-2-2z" />
  </FolderSvg>
);

const tabs = [
  ["x", "(20)"], ["ih", "Stories"], ["chrome", "chrome"], ["tick", "抖音", "music"], ["bili", "别骂了"], ["bili", "哔哩哔"],
  ["aiz", "AI助手"], ["wxread", "公众号"], ["gmail", "360度"], ["wxread", "公众号"], ["insta", "疾風"], ["keep", "Google"],
  ["monocle", "姐妹", "lens"], ["blueeye", "(100)"], ["rest", "REST"], ["ope", "Open"], ["gtask", "Google"], ["google", "Chev"],
  ["youtube", "YouT"], ["google", "cloud"],
];

const exts = [
  ["extStar"], ["extCloud"], ["doc", "51", "#3f51b5", "#fff"], ["sc", "0", "#1e5b14", "#fff"], ["bitw"], ["tilde"], ["grey71", "71", "#b5b5b5", "#222"],
  ["reply"], ["blob"], ["fox"], ["mcoin"],
];

const bookmarks = ["2024-8", "2024-7", "2024-6", "2024-4", "2024-3", "2024-2", "2024-1", "Bookmark", "INDEX", "ToolSet", "StateSite", "timeline", "插件书签"];

const filters = [
  ["SORT BY", "Newest", true], ["MONTHLY REVENUE", "Any Amount"], ["LEARNINGS", "Anything"], ["COMPANY SIZE", "Any Number"],
  ["INDUSTRY", "Anything"], ["BUSINESS MODEL", "Anything"], ["LOCATION", "Any"],
];

const cards = [
  { author: "MUBASHAR IQBAL", title: "Making $10k+/mo as a full-time founder after building 120 side hustles", mrr: "$10K MRR", co: "MUBS, GUESTLAB, MICROASSETS, ..." },
  { author: "JONATHAN WILKE", title: "Growing a side hustle into a $10,000/month SaaS boilerplate business", mrr: "$10K MRR", co: "SUPASTARTER" },
  { author: "JOSEF BUETTGEN, TIMO NIKOLAI", title: "How a travel influencer and an indie hacker launched a voice AI SaaS in two weeks", mrr: "$1.8K MRR", co: "SETTERAI" },
  { author: "RYAN DOYLE, JAKOB GREENFELD", title: "Turning cold email into a $90k MRR business while traveling the world" },
  { author: "NICOLAS JEANNE", title: "Getting acquired for $200k within 11 months by leveraging Facebook ads" },
  { author: "TAMIR BASHKIN", title: <>$27,577/mo in passive income from a lifestyle business: "My partner jokes that I<Apostrophe>’</Apostrophe>ve been trying and failing to run out of cash."</> },
];

const taskIcons = [
  ["win"], ["search"], ["taskview"], ["wolf"], ["dots", 1], ["flow", 1], ["gem", 1], ["swirl"], ["chromeAvatar", 2], ["simple", 1], ["vscode", 1], ["n123"],
  ["wechat", 1], ["mm", 1], ["android"], ["notion"], ["tiktok", 1], ["paw"], ["explorer", 1], ["blackdoc"], ["kk"], ["cat", 1], ["acorn"], ["purpfolder"],
  ["check"], ["discord"], ["gear"], ["store"], ["sync"], ["wave"], ["brick"], ["cubes"], ["bulb"], ["term"], ["ghub"], ["bitw", 1], ["vfiles"], ["mapblue", 1],
];

const ChevronSvg = styled.svg`
  width: 18px; height: 28px; flex: none;
`;
const Chevron = ({ c }) => (
  <ChevronSvg viewBox="0 0 18 28" fill="none" stroke={c} strokeWidth="6.5"><path d="M3 2l11 12L3 26" /></ChevronSvg>
);

export default function App() {
  return (
    <Frame>
      <Global />
      <TabStrip>
        <TabMenu><ChevronDown size={24} strokeWidth={3.4} /></TabMenu>
        {tabs.map(([icon, label, extra], i) => (
          <Tab key={i} $active={i === 1} $sep={i >= 2}>
            <Glyph name={icon} s={28} />
            {extra && <TabExtra><Glyph name={extra} s={24} /></TabExtra>}
            <TabLabel $short={!!extra}>{label}</TabLabel>
            <TabClose $active={i === 1}><X size={22} strokeWidth={i === 1 ? 3.4 : 3} /></TabClose>
          </Tab>
        ))}
        <NewTab><PlusIcon size={28} strokeWidth={2.6} /></NewTab>
        <WindowButtons>
          <WindowButton><Minus size={24} strokeWidth={3} /></WindowButton>
          <WindowButton><RestoreMark /></WindowButton>
          <WindowButton><X size={30} strokeWidth={2.4} /></WindowButton>
        </WindowButtons>
      </TabStrip>
      <Toolbar>
        <ToolButton $dim><ArrowLeft size={32} strokeWidth={2.2} /></ToolButton>
        <ToolButton $dim><ArrowRight size={32} strokeWidth={2.2} /></ToolButton>
        <ToolButton><RotateCw size={30} strokeWidth={2.8} /></ToolButton>
        <ToolButton><Home size={32} strokeWidth={2.6} /></ToolButton>
        <Omnibox>
          <SiteChip>
            <svg width="24" height="24" viewBox="0 0 24 24" fill="none" stroke="#333" strokeWidth="2.6"><circle cx="6" cy="6" r="3.5" /><path d="M12 6h11M1 18h11" /><circle cx="18" cy="18" r="3.5" /></svg>
          </SiteChip>
          <UrlText>indiehackers.com/stories</UrlText>
          <Star size={30} strokeWidth={2.4} color="#333" />
        </Omnibox>
        {exts.map(([name, badge, bg, fg], i) => (
          <ExtSlot key={i}>
            <Glyph name={name} s={40} />
            {badge && <ExtBadge $bg={bg} $fg={fg}>{badge}</ExtBadge>}
          </ExtSlot>
        ))}
        <ExtSlot><Puzzle size={36} strokeWidth={2.4} color="#333" /></ExtSlot>
        <ToolDivider />
        <ExtSlot><Glyph name="queue" s={32} /></ExtSlot>
        <ExtSlot><Glyph name="bowl" s={40} /></ExtSlot>
        <MenuRing><span /><span /><span /></MenuRing>
      </Toolbar>
      <Bookmarks>
        {bookmarks.map(b => (<Bookmark key={b} $latin={/[a-zA-Z]/.test(b)}><Folder />{b}</Bookmark>))}
        <ScriptMark>
          <ScriptGlobe><Glyph name="globe" s={25} /></ScriptGlobe>
          <Glyph name="lock" s={22} />
          解锁限制
        </ScriptMark>
        <OtherBookmarks><Folder />所有书签</OtherBookmarks>
      </Bookmarks>
      <Viewport>
        <Progress />
        <Page>
          <TopNav>
            <PlusLink>Plus</PlusLink>
            <NavItems>
              <NavItem>Starting Up</NavItem>
              <NavItem>Ideas</NavItem>
              <Brand><BrandMark>IH</BrandMark>INDIE HACKERS</Brand>
              <NavItem $active>Stories</NavItem>
              <NavItem>Products</NavItem>
            </NavItems>
            <JoinLink>Join</JoinLink>
          </TopNav>
          <Hero>
            <Title>Stories Database</Title>
            <Subtitle>Hundreds of indie hackers share how they've started and grown profitable online businesses.</Subtitle>
          </Hero>
          <Content>
            <Filters>
              {filters.map(([label, value, active]) => (
                <Filter key={label} $active={active}>
                  <FilterText>
                    <FilterLabel>{label}</FilterLabel>
                    <FilterValue>{value}</FilterValue>
                  </FilterText>
                  <Chevron c={active ? "#4a90e2" : "#fff"} />
                </Filter>
              ))}
            </Filters>
            <CardGrid>
              {cards.map(c => (
                <Card key={c.author}>
                  <CardBody>
                    <Author>{c.author}</Author>
                    <CardTitle>{c.title}</CardTitle>
                  </CardBody>
                  <CardFoot>
                    {c.mrr && <><Mrr>{c.mrr}</Mrr><Dot />{c.co}</>}
                  </CardFoot>
                </Card>
              ))}
            </CardGrid>
          </Content>
          <Spinner viewBox="0 0 40 40" fill="none"><path d="M5 10A16 16 0 0 0 35 22" stroke="#4a90e2" strokeWidth="4" strokeLinecap="round" /></Spinner>
        </Page>
        <Scrollbar>
          <ScrollArrow />
          <ScrollThumb />
          <ScrollArrow $down />
        </Scrollbar>
      </Viewport>
      <Taskbar>
        {taskIcons.map(([name, state], i) => (
          <TaskSlot key={i} $active={state === 2}>
            <Glyph name={name} s={42} />
            {state && <TaskDot $wide={state === 2} />}
          </TaskSlot>
        ))}
        <Weather>
          <svg width="48" height="54" viewBox="0 0 48 54" style={{ flex: "none" }}>
            <circle cx="15" cy="18" r="12" fill="#e2622c" /><circle cx="32" cy="12" r="13" fill="#d22f27" />
            <path d="M2 40c0-9 6-13 22-13s22 4 22 13c0 4-2 6-6 6H8c-4 0-6-2-6-6z" fill="#2aa5d8" />
            <circle cx="12" cy="46" r="6" fill="#2aa5d8" /><circle cx="36" cy="46" r="6" fill="#2aa5d8" />
          </svg>
          <WeatherText>宝安区<span>路况拥堵</span></WeatherText>
        </Weather>
        <Tray>
          <TrayItem $w={56}><ChevronUp size={26} strokeWidth={2.4} /></TrayItem>
          <TrayItem $w={66}><svg width="28" height="34" viewBox="0 0 28 34"><rect width="28" height="34" fill="#fff" /><path d="M4 7h20v14H4zM14 3v30M4 14h20" stroke="#222" strokeWidth="3" fill="none" /></svg></TrayItem>
          <TrayItem $w={66}><svg width="28" height="30" viewBox="0 0 28 30"><rect width="28" height="30" rx="3" fill="#000" /><path d="M6 8v10h16V8M14 6v12M5 23h18" stroke="#fff" strokeWidth="3" fill="none" /></svg></TrayItem>
          <TrayItem $w={56}><svg width="30" height="36" viewBox="0 0 30 36" fill="none" stroke="#222" strokeWidth="2.2"><path d="M20 4H3v22h17M11 26v6M5 33h12" /><rect x="21" y="2" width="7" height="14" rx="3" /></svg></TrayItem>
          <TrayItem $w={32}><Volume2 size={28} strokeWidth={2} /></TrayItem>
          <TrayItem $w={52}><svg width="30" height="26" viewBox="0 0 30 26" fill="none" stroke="#111" strokeWidth="2.2"><rect x="2" y="5" width="24" height="17" rx="3" /><path d="M27 10v7" /><path d="M14 1L9 12h5l-3 11" /><rect x="15" y="9" width="8" height="9" fill="#222" stroke="none" /></svg></TrayItem>
        </Tray>
        <Clock>17:42<br />2024/08/01</Clock>
        <TrayItem $w={40}><Bell size={28} color="#0d2a4a" fill="#0d2a4a" /></TrayItem>
      </Taskbar>
    </Frame>
  );
}
